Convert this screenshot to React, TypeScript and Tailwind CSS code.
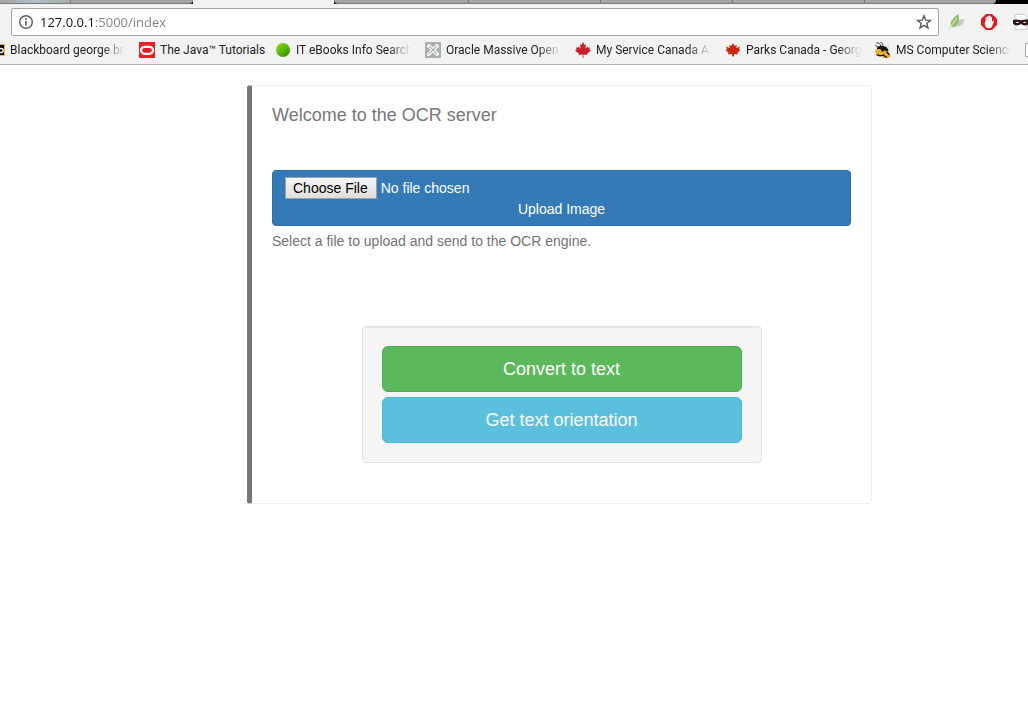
import type { ReactNode } from 'react';

const LeafPath =
  'M8 0 6.5 3 5 2.2 5.6 6.4 3.6 4.6 3.1 5.8 .9 5.4 1.6 7.8 0 8.6 4 11.7 3.6 13 7.6 12.5 7.6 16 8.4 16 8.4 12.5 12.4 13 12 11.7 16 8.6 14.4 7.8 15.1 5.4 12.9 5.8 12.4 4.6 10.4 6.4 11 2.2 9.5 3Z';

function BlackboardIcon() {
  return (
    <svg width="5" height="16" viewBox="0 0 5 16" className="shrink-0" aria-hidden="true">
      <path d="M0 2h5v12H0z" fill="#f5b81f" />
      <path d="M0 3h4v10H0z" fill="#000" />
      <path d="M0 6.5h1.2a1.5 1.5 0 0 1 0 4H0" fill="none" stroke="#fff" strokeWidth="1.4" />
    </svg>
  );
}

function OracleIcon() {
  return (
    <svg width="16" height="16" viewBox="0 0 16 16" className="shrink-0" aria-hidden="true">
      <path d="M0 0h16v16H0z" fill="#ec1c24" />
      <rect x="2" y="4.8" width="12" height="7" rx="3.5" fill="none" stroke="#fff" strokeWidth="2.2" />
    </svg>
  );
}

function GreenBallIcon() {
  return (
    <svg width="16" height="16" viewBox="0 0 16 16" className="shrink-0" aria-hidden="true">
      <defs>
        <linearGradient id="ball" x1="0" y1="0" x2="1" y2="1">
          <stop offset="0" stopColor="#8ed815" />
          <stop offset="0.5" stopColor="#5bb80a" />
          <stop offset="1" stopColor="#2f8500" />
        </linearGradient>
      </defs>
      <circle cx="8" cy="8" r="7" fill="url(#ball)" />
    </svg>
  );
}

function ToolsIcon() {
  return (
    <svg width="16" height="16" viewBox="0 0 16 16" className="shrink-0" aria-hidden="true">
      <rect width="16" height="16" rx="1" fill="#a9aeb2" />
      <g fill="none" stroke="#fff" strokeLinecap="round">
        <path d="m4 4 8 8M12 4l-8 8" strokeWidth="3.4" />
        <path d="m2.4 4.6 2.2-2.2M11.4 2.4l2.2 2.2M11.4 13.6l2.2-2.2M2.6 13.4l1.4-.4" strokeWidth="1.2" />
      </g>
      <path d="m4 4 8 8M12 4l-8 8" fill="none" stroke="#a9aeb2" strokeWidth="1.1" />
    </svg>
  );
}

function MapleIcon({ parks = false }: { parks?: boolean }) {
  return (
    <svg width="16" height="16" viewBox="0 0 16 16" className="shrink-0" aria-hidden="true">
      {parks ? (
        <path
          d="M8 1 6.3 4 4.3 2.8 4.6 6 1 4.5 2.2 7.2.5 8 3.6 10.7 3 12.6 6.8 11.9 7.5 14.6 9 14.4 9.2 12 13 12.6 12.4 10.7 15.5 8 13.8 7.2 15 4.5 11.4 6 11.7 2.8 9.7 4Z"
          fill="#c8260f"
        />
      ) : (
        <path d={LeafPath} fill="#c5202c" />
      )}
    </svg>
  );
}

function BeeIcon() {
  return (
    <svg width="16" height="16" viewBox="0 0 16 16" className="shrink-0" aria-hidden="true">
      <path d="M1.500 1c2.500-.5 3.500.8 4.500 3M5.500.3c2 .5 2.500 1.700 2.300 3.500M.3 3.500 3 5" fill="none" stroke="#222" strokeWidth=".9" />
      <path d="M11 4l3-1v3l1 3-3-2Z" fill="#dcdcdc" />
      <path d="M2 6c1-2 5-3 8-1.500 2 .8 3 2.500 3.500 4.500L8 10.500 2 8.500Z" fill="#15120d" />
      <path d="M0 9c1.500-2 4-2.500 6-1.500L7 10l-1.500 3C3 13.500.5 12 0 9Z" fill="#e9ac2b" />
      <path d="M7.500 9.500c2.500-2 5.500-1 6.500 1l1.500 4.500-3.500 1H8l-2-3Z" fill="#e9ac2b" />
      <path d="M1.500 12.500c2 1.500 4.500 1.500 6.500.5l4 2.500M11.500 9.500l3 3.500" fill="none" stroke="#15120d" strokeWidth="1.300" />
    </svg>
  );
}

type Bookmark = { label: string; icon: ReactNode; short?: boolean };

const bookmarks: Bookmark[] = [
  { label: 'Blackboard george brown', icon: <BlackboardIcon /> },
  { label: 'The Java™ Tutorials', icon: <OracleIcon />, short: true },
  { label: 'IT eBooks Info Search', icon: <GreenBallIcon /> },
  { label: 'Oracle Massive Open Online', icon: <ToolsIcon /> },
  { label: 'My Service Canada Account', icon: <MapleIcon /> },
  { label: 'Parks Canada - Georgian', icon: <MapleIcon parks /> },
  { label: 'MS Computer Science', icon: <BeeIcon /> },
];

function TabStrip() {
  return (
    <div className="flex h-1 overflow-hidden bg-black" aria-hidden="true">
      <div className="w-[70px] border-b border-[#777] bg-linear-to-r from-[#a5a5a5] via-[#b4bcc8] to-[#a9aea6]" />
      <div className="w-[123px] rounded-br-sm border-b border-l border-[#777] bg-[#a3a3a3]" />
      <div className="w-[141px] bg-[#f2f2f2]" />
      <div className="w-[134px] rounded-bl-sm border-b border-[#777] bg-[#a3a3a3]" />
      <div className="w-[132px] border-b border-l border-[#777] bg-[#a3a3a3]" />
      <div className="w-[132px] border-b border-l border-[#777] bg-[#a3a3a3]" />
      <div className="w-[132px] border-b border-l border-[#777] bg-[#a3a3a3]" />
      <div className="w-[132px] rounded-br-sm border-b border-l border-[#777] bg-[#a3a3a3]" />
    </div>
  );
}

function AddressRow() {
  return (
    <div className="flex items-center gap-[9px] overflow-hidden pt-1 pl-[11px]">
      <div className="flex h-7 min-w-0 flex-1 items-center gap-1.5 rounded-xs border border-[#a6a6a6] bg-white px-1.5">
        <svg width="16" height="16" viewBox="0 0 16 16" className="shrink-0" aria-hidden="true">
          <circle cx="8" cy="8" r="6.300" fill="none" stroke="#5a5a5a" strokeWidth="1.400" />
          <path d="M7.200 7h1.600v4.500H7.200zM7.200 4.300h1.600v1.600H7.200z" fill="#5a5a5a" />
        </svg>
        <input
          type="text"
          aria-label="Address"
          defaultValue="127.0.0.1:5000/index"
          className="min-w-0 flex-1 bg-linear-to-r from-[#111] from-[54px] to-[#808080] to-[54px] bg-clip-text pt-0.5 text-[13px] text-transparent outline-none"
        />
        <button type="button" aria-label="Bookmark this page" className="shrink-0">
          <svg width="16" height="16" viewBox="0 0 16 16" aria-hidden="true">
            <path
              d="m8 1.800 1.700 4.300 4.700.3-3.600 3 1.200 4.600-4-2.600L4 14l1.200-4.600-3.600-3 4.700-.3Z"
              fill="none"
              stroke="#5a5a5a"
              strokeWidth="1.400"
            />
          </svg>
        </button>
      </div>
      <div className="flex w-20 shrink-0 items-center gap-4">
        <button type="button" aria-label="Leaf extension" className="shrink-0">
          <svg width="17" height="16" viewBox="0 0 17 16" aria-hidden="true">
            <path d="M4 14c3-6 7-9 12-9 .5 4-2 8-9 8Z" fill="#c9c9c9" />
            <path d="M10 0c2.500 6 1 12-6.500 13C1 7 5 5 10 0Z" fill="#8fbd68" />
            <path d="M9 4C7 7 4 10 1 15.500" fill="none" stroke="#d5e8bd" strokeWidth="1.200" />
          </svg>
        </button>
        <button type="button" aria-label="Ad blocker" className="shrink-0">
          <svg width="16" height="16" viewBox="0 0 16 16" aria-hidden="true">
            <path d="M5 0h6l5 5v6l-5 5H5l-5-5V5Z" fill="#e0191d" />
            <path
              d="M3.800 8 4.600 7V3.500q.8-.9 1.500 0V2.500q.8-.9 1.600 0V1.800q.9-.8 1.700 0V3q.8-.7 1.600.1V8l1-1.200q1.200-.4 1 .5L10.800 13q-1 1.300-3.700 1.200Q4 13.800 3.800 10Z"
              fill="#fff"
            />
            <path d="M6.100 3.500v4M7.700 3v4.500M9.400 3.500v4" stroke="#e9a0a0" strokeWidth=".5" />
          </svg>
        </button>
        <button type="button" aria-label="Mask extension" className="shrink-0">
          <svg width="16" height="16" viewBox="0 0 16 16" aria-hidden="true">
            <path d="M2 .5h9l3 3v12H2z" fill="#fff" stroke="#ccc" />
            <path d="M0 6c3-1 5-.5 8 .3 3-.8 5-1.300 8-.3v3.500c-1.500 2.500-6 2.500-8 .2-2 2.300-6.500 2.300-8-.2Z" fill="#2b1717" />
            <path d="M2.500 8.300q2-1.100 3.800.3-2 1-3.800-.3M9.700 8.600q1.800-1.400 3.800-.3-1.800 1.300-3.800.3" fill="#fff" />
          </svg>
        </button>
      </div>
    </div>
  );
}

export default function App() {
  return (
    <div className="min-h-screen overflow-x-hidden bg-white font-['Liberation_Sans',Arial,sans-serif]">
      <header className="font-['Open_Sans','Noto_Sans',sans-serif]">
        <TabStrip />
        <div className="border-b border-[#b0b0b0] bg-[#f2f2f2]">
          <AddressRow />
          <nav
            aria-label="Bookmarks"
            className="flex h-7 items-center gap-3.5 overflow-hidden font-[Roboto,'Open_Sans',sans-serif] text-[12px] text-[#222]"
          >
            {bookmarks.map((b) => (
              <a key={b.label} href="#" className="flex shrink-0 items-center gap-[5px]">
                {b.icon}
                <span
                  className={
                    b.short
                      ? 'w-[101px] whitespace-nowrap'
                      : 'w-[115px] overflow-hidden whitespace-nowrap [mask-image:linear-gradient(to_right,#000_80%,transparent)]'
                  }
                >
                  {b.label}
                </span>
              </a>
            ))}
            <svg width="16" height="16" viewBox="0 0 16 16" className="shrink-0" aria-hidden="true">
              <path d="M.5 1.500h9l4 4v9H.5z" fill="#fff" stroke="#aaa" />
            </svg>
          </nav>
        </div>
      </header>

      <main className="py-5 pr-5 pl-[247px]">
        <section className="max-w-[625px] rounded-[3px] border border-l-[5px] border-[#eee] border-l-[#777] p-5">
          <h4 className="text-[18px] leading-[18px] text-[#777]">Welcome to the OCR server</h4>
          <label className="mt-[46px] block cursor-pointer rounded-sm border border-[#2e6da4] bg-[#337ab7] px-3 py-1.5 text-center text-[14px] leading-5 text-white">
            <input
              type="file"
              className="block w-full text-[14px] leading-[22px] file:mr-1 file:h-[22px] file:border file:border-solid file:border-[#a0a0a0] file:bg-linear-to-b file:from-[#f6f6f6] file:to-[#dedede] file:pr-2 file:pl-[7px] file:text-[14px] file:leading-5 file:text-black"
            />
            Upload Image
          </label>
          <p className="mt-[5px] text-[14px] leading-5 text-[#737373]">
            Select a file to upload and send to the OCR engine.
          </p>
          <div className="mx-auto mt-[75px] mb-5 flex max-w-[400px] flex-col gap-[5px] rounded-sm border border-[#e3e3e3] bg-[#f5f5f5] p-[19px] shadow-[inset_0_1px_1px_rgba(0,0,0,0.05)]">
            <button
              type="button"
              className="h-[46px] rounded-md border border-[#4cae4c] bg-[#5cb85c] text-[18px] leading-6 text-white"
            >
              Convert to text
            </button>
            <button
              type="button"
              className="h-[46px] rounded-md border border-[#46b8da] bg-[#5bc0de] text-[18px] leading-6 text-white"
            >
              Get text orientation
            </button>
          </div>
        </section>
      </main>
    </div>
  );
}
